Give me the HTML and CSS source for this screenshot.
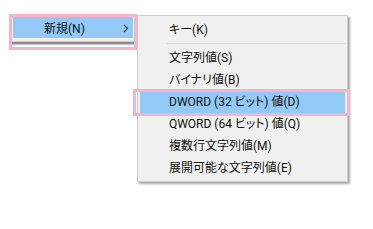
FILE: index.html
```html
<!DOCTYPE html>
<html lang="ja">
<head>
<meta charset="utf-8">
<link rel="stylesheet" href="styles.css">
</head>
<body>
<div class="desk">
  <div class="menu parent">
    <div class="pitem active">
      <span class="plabel">新規(N)</span>
      <svg class="arrow" width="6" height="9" viewBox="0 0 6 9"><path d="M1 1 L4.5 4.5 L1 8" fill="none" stroke="#333" stroke-width="1.2"/></svg>
    </div>
  </div>
  <div class="menu sub">
    <div class="item">キー(K)</div>
    <div class="sep"></div>
    <div class="item">文字列値(S)</div>
    <div class="item">バイナリ値(B)</div>
    <div class="item active">DWORD (32 ビット) 値(D)</div>
    <div class="item">QWORD (64 ビット) 値(Q)</div>
    <div class="item">複数行文字列値(M)</div>
    <div class="item">展開可能な文字列値(E)</div>
  </div>
  <div class="mark mark-new"></div>
  <div class="mark mark-dword"></div>
</div>
</body>
</html>
```
FILE: styles.css
```css
html, body {
  margin: 0;
  padding: 0;
  background: #fff;
}
body {
  width: 373px;
  height: 229px;
  overflow: hidden;
  font-family: Roboto, "Noto Sans CJK JP", sans-serif;
  font-size: 12px;
  color: #111;
  font-feature-settings: "palt";
}
.desk {
  position: relative;
  width: 373px;
  height: 229px;
}
.menu {
  position: absolute;
  background: #f0f0f0;
  border: 1px solid #cccccc;
  box-sizing: border-box;
}
.parent {
  left: 10px;
  top: 16px;
  width: 126px;
  height: 26px;
  border-top: none;
  padding: 1px 2px 0 2px;
  box-shadow: 0 2px 0 #8c8c8c, 0 3px 1px #c8c8c8;
}
.pitem {
  height: 21px;
  display: flex;
  align-items: center;
  position: relative;
}
.pitem.active {
  background: #91c9f7;
}
.plabel {
  margin-left: 31px;
}
.arrow {
  position: absolute;
  left: 110px;
  top: 7px;
}
.sub {
  left: 137px;
  top: 15px;
  width: 211px;
  height: 167px;
  padding: 3px 2px 2px 2px;
  box-shadow: 2px 2px 2px rgba(0, 0, 0, 0.35);
}
.item {
  height: 22px;
  line-height: 22px;
  padding-left: 29px;
  white-space: nowrap;
}
.item.active {
  background: #91c9f7;
}
.sep {
  height: 1px;
  background: #d7d7d7;
  margin: 2px 0 3px 27px;
}
.mark {
  position: absolute;
  border: 3px solid #f4b4c9;
  box-sizing: border-box;
}
.mark-new {
  left: 9px;
  top: 14px;
  width: 128px;
  height: 36px;
}
.mark-dword {
  left: 133px;
  top: 89px;
  width: 217px;
  height: 27px;
}
```
